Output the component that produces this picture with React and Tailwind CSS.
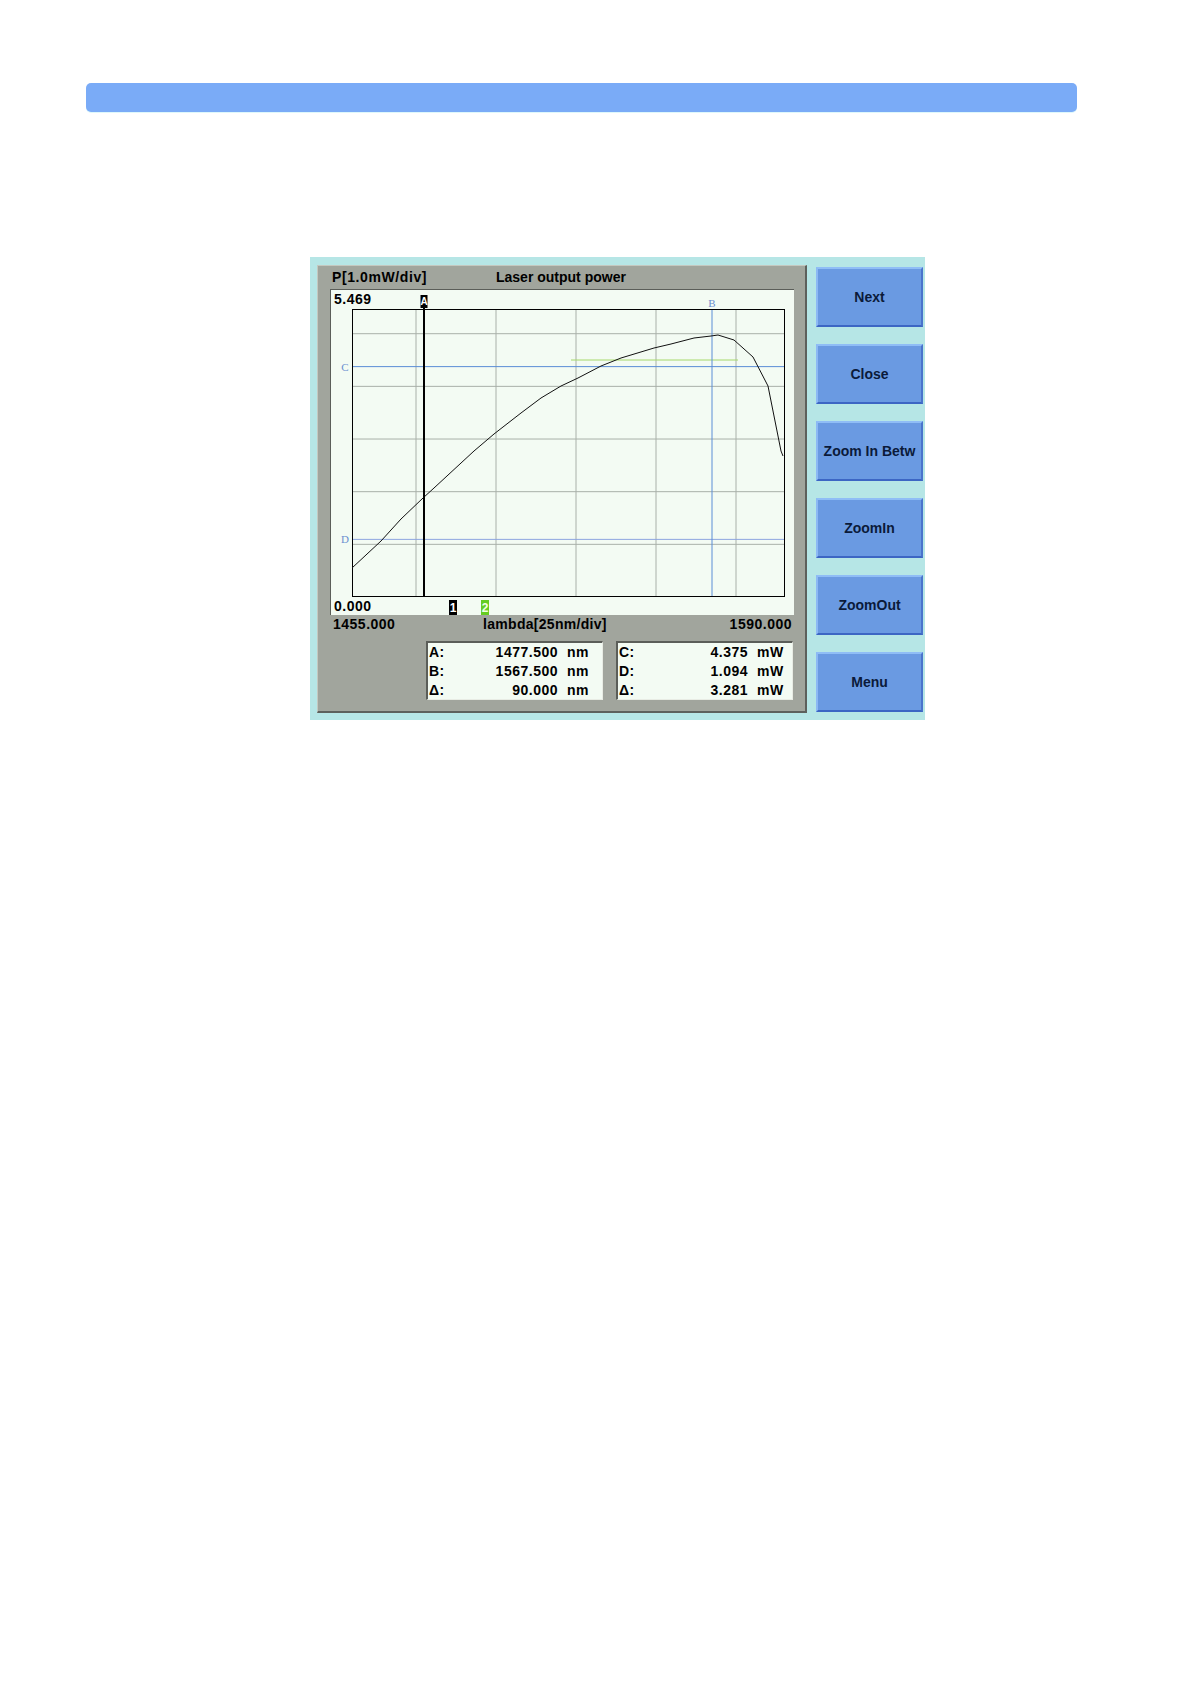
// Écran « Laser output power » : graphe P(lambda) + barre de boutons
const FONT = { fontFamily: '"Liberation Sans", Arial, sans-serif' };

// échelle du graphe (coordonnées relatives à la zone claire 463x325)
const X0 = 21;
const Y0 = 307;
const xNm = (nm) => X0 + (nm - 1455) * 3.2;
const yMw = (mw) => Y0 - mw * 52.66;

const COURBE = [
  [21, 278], [50, 251], [70, 229], [92, 208], [103, 198], [143, 161],
  [163, 144], [190, 123], [210, 108], [230, 96], [247, 88], [270, 76],
  [290, 68], [323, 58], [340, 54], [363, 48], [380, 46], [387, 45],
  [403, 50], [422, 67], [437, 96], [450, 161], [452, 166],
];

const BOUTONS = ["Next", "Close", "Zoom In Betw", "ZoomIn", "ZoomOut", "Menu"];

function Graphe() {
  const vx = [1475, 1500, 1525, 1550, 1575].map(xNm);
  const hy = [1, 2, 3, 4, 5].map(yMw);
  const yC = yMw(4.375);
  const yD = yMw(1.094);
  const xA = xNm(1477.5);
  const xB = xNm(1567.5);

  return (
    <svg width="463" height="325" viewBox="0 0 463 325" className="block">
      {/* grille */}
      {vx.map((x) => (
        <line key={"v" + x} x1={x} y1={19} x2={x} y2={Y0} stroke="#a9b0a9" strokeWidth="1" />
      ))}
      {hy.map((y) => (
        <line key={"h" + y} x1={X0} y1={y} x2={453} y2={y} stroke="#a9b0a9" strokeWidth="1" />
      ))}

      {/* ligne verte */}
      <line x1={240} y1={70} x2={407} y2={70} stroke="#a6d86a" strokeWidth="1" />

      {/* curseurs C / D / B */}
      <line x1={X0} y1={yC} x2={453} y2={yC} stroke="#5a8dd6" strokeWidth="1" />
      <line x1={X0} y1={yD} x2={453} y2={yD} stroke="#8ea6e0" strokeWidth="1" />
      <line x1={xB} y1={19} x2={xB} y2={Y0} stroke="#5a8dd6" strokeWidth="1" />

      {/* cadre */}
      <rect x={X0 + 0.5} y={19.5} width={432} height={287} fill="none" stroke="#000" strokeWidth="1" />

      {/* courbe */}
      <polyline
        points={COURBE.map((p) => p.join(",")).join(" ")}
        fill="none"
        stroke="#111"
        strokeWidth="1"
      />

      {/* curseur A */}
      <line x1={xA} y1={8} x2={xA} y2={Y0} stroke="#000" strokeWidth="2" />
      <rect x={xA - 3.5} y={5} width={7} height={13} fill="#000" />
      <text x={xA} y={15} fontSize="10" fill="#fff" textAnchor="middle" fontFamily="Liberation Sans, sans-serif" fontWeight="bold">A</text>

      {/* étiquettes curseurs */}
      <text x={14} y={yC + 4} fontSize="11" fill="#6a8fd0" fontFamily="Liberation Serif, serif" textAnchor="middle">C</text>
      <text x={14} y={yD + 4} fontSize="11" fill="#6a8fd0" fontFamily="Liberation Serif, serif" textAnchor="middle">D</text>
      <text x={xB} y={17} fontSize="11" fill="#6a8fd0" fontFamily="Liberation Serif, serif" textAnchor="middle">B</text>

      {/* valeurs d'axe */}
      <text x={3} y={14} fontSize="14" fontWeight="bold" letterSpacing="0.5" fill="#000" fontFamily="Liberation Sans, sans-serif">5.469</text>
      <text x={3} y={321} fontSize="14" fontWeight="bold" letterSpacing="0.5" fill="#000" fontFamily="Liberation Sans, sans-serif">0.000</text>

      {/* marqueurs 1 / 2 */}
      <rect x={118} y={310} width={8} height={15} fill="#000" />
      <text x={122} y={322} fontSize="12" fontWeight="bold" fill="#fff" textAnchor="middle" fontFamily="Liberation Sans, sans-serif">1</text>
      <rect x={150} y={310} width={8} height={15} fill="#66cc22" />
      <text x={154} y={322} fontSize="12" fontWeight="bold" fill="#f2ffe8" textAnchor="middle" fontFamily="Liberation Sans, sans-serif">2</text>
    </svg>
  );
}

function BoiteValeurs({ lignes }) {
  return (
    <div className="w-[177px] h-[59px] bg-[#f3fbf3] border-t-2 border-l-2 border-b border-r border-t-[#5b5e59] border-l-[#5b5e59] border-b-[#e8ece4] border-r-[#e8ece4] flex flex-col">
      {lignes.map(([lab, val, unite]) => (
        <div key={lab} className="h-[19px] flex items-center text-[14px] font-bold tracking-[0.5px] text-black">
          <span className="w-[30px] pl-[1px]">{lab}</span>
          <span className="w-[100px] text-right">{val}</span>
          <span className="ml-[9px]">{unite}</span>
        </div>
      ))}
    </div>
  );
}

function Bouton({ label }) {
  return (
    <div className="w-[107px] h-[60px] flex items-center justify-center bg-[#6a9ae2] border-2 border-t-[#8fbdf6] border-l-[#8cb9f4] border-b-[#3c66c4] border-r-[#4a74cc] text-[14px] font-bold text-[#0b1a3a]">
      {label}
    </div>
  );
}

export default function App() {
  return (
    <div className="w-[1190px] h-[1682px] bg-white pt-[83px]" style={FONT}>
      {/* bandeau */}
      <div className="ml-[86px] w-[991px] h-[29px] rounded-[5px] bg-[#7aabf7] shadow-[0_1px_0_#dff8fb]" />

      {/* écran de l'instrument */}
      <div className="mt-[145px] ml-[310px] w-[615px] h-[463px] bg-[#b6e6e6] pl-[7px] pt-[8px] flex gap-[9px]">
        <div className="w-[490px] h-[448px] bg-[#a1a59d] border-t border-l border-t-[#c4c8c0] border-l-[#c4c8c0] border-r-2 border-b-2 border-r-[#5d605c] border-b-[#5d605c] flex flex-col">
          {/* titre */}
          <div className="h-[23px] flex items-center pl-[14px] text-[14px] font-bold text-black">
            <span className="w-[164px] tracking-[0.6px]">P[1.0mW/div]</span>
            <span>Laser output power</span>
          </div>

          {/* zone du graphe */}
          <div className="ml-[12px] w-[463px] h-[325px] bg-[#f3fbf3] border-t border-l border-t-[#5b5e59] border-l-[#5b5e59] box-content">
            <Graphe />
          </div>

          {/* axe x */}
          <div className="h-[18px] flex items-center pl-[15px] pr-[13px] text-[14px] font-bold tracking-[0.5px] text-black">
            <span className="w-[150px]">1455.000</span>
            <span className="tracking-[0.3px]">lambda[25nm/div]</span>
            <span className="ml-auto">1590.000</span>
          </div>

          {/* boîtes de valeurs */}
          <div className="mt-[8px] ml-[108px] flex gap-[13px]">
            <BoiteValeurs
              lignes={[
                ["A:", "1477.500", "nm"],
                ["B:", "1567.500", "nm"],
                ["Δ:", "90.000", "nm"],
              ]}
            />
            <BoiteValeurs
              lignes={[
                ["C:", "4.375", "mW"],
                ["D:", "1.094", "mW"],
                ["Δ:", "3.281", "mW"],
              ]}
            />
          </div>
        </div>

        {/* boutons */}
        <div className="mt-[2px] flex flex-col gap-[17px]">
          {BOUTONS.map((b) => (
            <Bouton key={b} label={b} />
          ))}
        </div>
      </div>
    </div>
  );
}
